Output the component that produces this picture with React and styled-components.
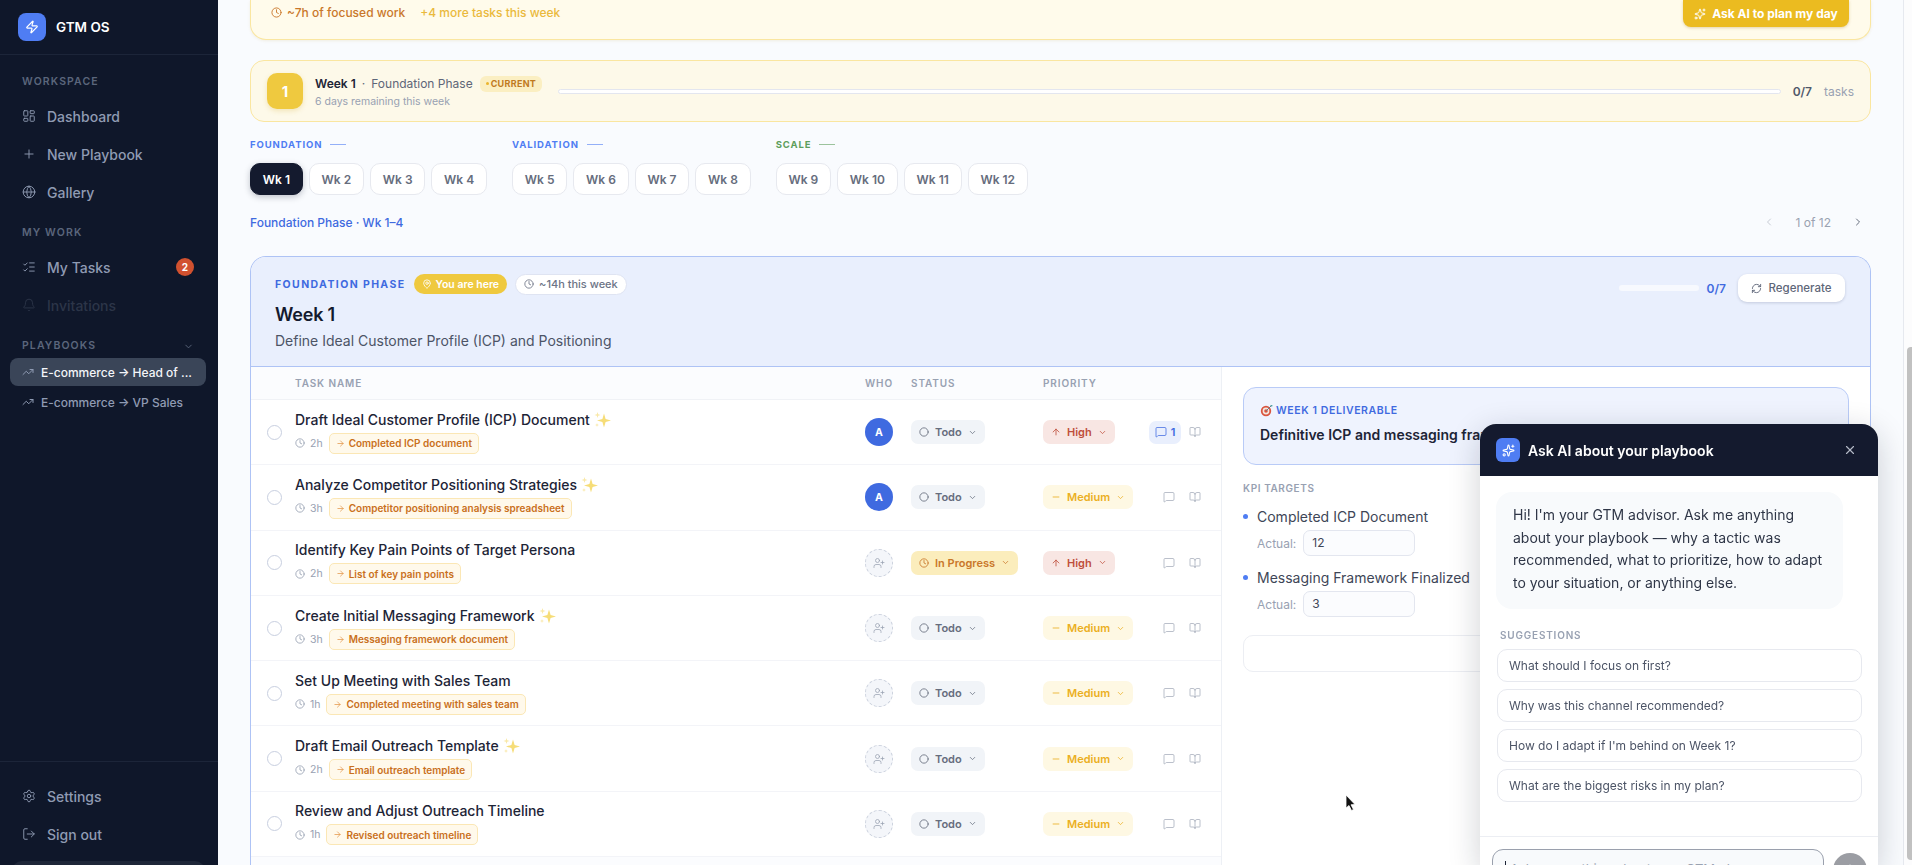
import React from 'react';
import styled, { createGlobalStyle } from 'styled-components';
import {
  ArrowRight, ArrowUp, BookOpen, ChevronDown, ChevronLeft, ChevronRight, Circle, Clock, Globe,
  LayoutDashboard, ListChecks, LogOut, MapPin, MessageSquare, Minus, Plus, RefreshCw,
  Settings, Sparkles, TrendingUp, UserPlus, X, Zap, Bell,
} from 'lucide-react';

const GlobalStyle = createGlobalStyle`
  * { box-sizing: border-box; }
  html, body { margin: 0; height: 100%; overflow: hidden; }
  body { font-family: Inter, "Liberation Sans", sans-serif; background: #f9fbfe; color: #141a2e; }
`;

const Shell = styled.div`
  display: flex;
  height: 865px;
  overflow: hidden;
`;

/* sidebar */
const Sidebar = styled.aside`
  width: 218px;
  flex: none;
  background: #0f172a;
  display: flex;
  flex-direction: column;
  overflow: hidden;
`;

const Brand = styled.div`
  height: 55px;
  flex: none;
  display: flex;
  align-items: center;
  gap: 10px;
  padding: 0 18px 1px;
  border-bottom: 1px solid #1c2539;
  color: #fff;
  font-size: 13.5px;
  font-weight: 600;
`;

const BrandMark = styled.div`
  width: 28px;
  height: 28px;
  border-radius: 8px;
  background: #4f7df3;
  display: flex;
  align-items: center;
  justify-content: center;
`;

const SideBody = styled.div`
  flex: 1;
  padding: 20px 12px 0 10px;
  display: flex;
  flex-direction: column;
`;

const SideLabel = styled.div`
  height: 14px;
  line-height: 14px;
  padding-left: 12px;
  font-size: 10.5px;
  font-weight: 600;
  letter-spacing: 1.1px;
  color: #5b667c;
  margin-top: ${({ $top }) => $top || 0}px;
  display: flex;
  align-items: center;
  justify-content: space-between;
  padding-right: 12px;
`;

const NavList = styled.div`
  display: flex;
  flex-direction: column;
  margin-top: 8px;
`;

const NavItem = styled.div`
  height: 38px;
  flex: none;
  display: flex;
  align-items: center;
  gap: 11px;
  padding-left: 12px;
  padding-right: 12px;
  font-size: 14px;
  font-weight: 500;
  color: ${({ $dim }) => ($dim ? '#2c3548' : '#8f9bb3')};
`;

const CountBadge = styled.span`
  margin-left: auto;
  width: 18px;
  height: 18px;
  border-radius: 50%;
  background: #d1512f;
  color: #fff;
  font-size: 10px;
  font-weight: 700;
  display: flex;
  align-items: center;
  justify-content: center;
`;

const PlaybookItem = styled.div`
  height: 28px;
  border-radius: 8px;
  display: flex;
  align-items: center;
  gap: 7px;
  padding: 0 12px;
  font-size: 12px;
  font-weight: 500;
  white-space: nowrap;
  margin-top: ${({ $top }) => $top || 0}px;
  background: ${({ $active }) => ($active ? '#3a4558' : 'transparent')};
  color: ${({ $active }) => ($active ? '#f3f5f9' : '#8f9bb3')};
  svg { color: #8f9bb3; flex: none; }
`;

const SideFoot = styled.div`
  border-top: 1px solid #1c2539;
  padding: 15px 10px 0;
  flex: none;
  height: 104px;
  margin-top: auto;
  display: flex;
  flex-direction: column;
  overflow: hidden;
`;

const UserStub = styled.div`
  height: 40px;
  flex: none;
  margin: 8px 3px 0 2px;
  border-radius: 10px;
  background: #1e2638;
`;

/* main column */
const Main = styled.main`
  flex: 1;
  min-width: 0;
  height: 865px;
  overflow: hidden;
  border-right: 1px solid #e6e9ef;
  margin-right: 8px;
  padding: 0 32px;
`;

const Banner = styled.div`
  height: 40px;
  background: #fffbeb;
  border: 1px solid #fae6a0;
  border-top: 0;
  border-radius: 0 0 16px 16px;
  display: flex;
  align-items: flex-start;
  justify-content: space-between;
  padding: 0 21px 0 20px;
  box-shadow: 0 1px 3px rgba(180, 140, 30, 0.12);
`;

const BannerInfo = styled.div`
  display: flex;
  align-items: center;
  gap: 15px;
  height: 25px;
  font-size: 12px;
  font-weight: 500;
  color: #c9772a;
`;

const BannerHint = styled.span`
  color: #eab93c;
`;

const IconText = styled.span`
  display: inline-flex;
  align-items: center;
  gap: 5px;
`;

const PlanButton = styled.div`
  width: 166px;
  height: 27px;
  border-radius: 0 0 8px 8px;
  background: #ebbb20;
  color: #fff;
  font-size: 12px;
  font-weight: 700;
  display: flex;
  align-items: center;
  justify-content: center;
  gap: 6px;
  box-shadow: 0 1px 3px rgba(160, 120, 20, 0.3);
`;

const WeekBar = styled.div`
  height: 62px;
  margin-top: 20px;
  background: #fdf9e9;
  border: 1px solid #fae6a0;
  border-radius: 14px;
  display: flex;
  align-items: center;
  padding: 0 16px;
`;

const WeekNumber = styled.div`
  width: 36px;
  height: 36px;
  border-radius: 10px;
  background: #efc93f;
  color: #fff;
  font-size: 15px;
  font-weight: 700;
  display: flex;
  align-items: center;
  justify-content: center;
  flex: none;
  box-shadow: 0 2px 5px rgba(210, 170, 40, 0.25);
`;

const WeekText = styled.div`
  margin-left: 12px;
  flex: none;
  display: flex;
  flex-direction: column;
  gap: 2px;
`;

const WeekTitle = styled.div`
  display: flex;
  align-items: center;
  gap: 6px;
  font-size: 12px;
  color: #5e6678;
  height: 18px;
  b { color: #1d2436; font-weight: 600; }
`;

const CurrentTag = styled.span`
  height: 16px;
  padding: 0 6px;
  margin-left: 1px;
  border-radius: 6px;
  background: #fbefc2;
  color: #c07a1e;
  font-size: 9px;
  font-weight: 700;
  letter-spacing: 0.3px;
  display: inline-flex;
  align-items: center;
  gap: 2px;
  &::before {
    content: '';
    width: 3px;
    height: 3px;
    border-radius: 50%;
    background: #ebb52c;
  }
`;

const WeekSub = styled.div`
  font-size: 10.5px;
  color: #98a1b2;
`;

const WeekTrack = styled.div`
  flex: 1;
  height: 5px;
  margin: 0 12px 0 16px;
  border-radius: 3px;
  background: #fff;
  border: 1px solid #e3e6ef;
`;

const WeekCount = styled.span`
  font-size: 12px;
  font-weight: 600;
  color: #50586a;
`;

const WeekUnit = styled.span`
  margin-left: 12px;
  font-size: 12px;
  color: #98a1b2;
`;

const PhaseRow = styled.div`
  display: flex;
  margin-top: 14px;
  gap: 25px;
`;

const PhaseGroup = styled.div`
  display: flex;
  flex-direction: column;
  gap: 11px;
`;

const PhaseLabel = styled.div`
  height: 16px;
  display: flex;
  align-items: center;
  gap: 8px;
  font-size: 9.5px;
  font-weight: 700;
  letter-spacing: 0.9px;
  color: ${({ $color }) => $color};
  &::after {
    content: '';
    width: 16px;
    height: 1px;
    background: ${({ $color }) => $color};
    opacity: 0.6;
  }
`;

const Pills = styled.div`
  display: flex;
  gap: 6px;
`;

const WeekPill = styled.div`
  height: 32px;
  padding: 0 11.8px;
  border-radius: 10px;
  font-size: 12px;
  font-weight: 600;
  display: flex;
  align-items: center;
  justify-content: center;
  background: ${({ $active }) => ($active ? '#141a2e' : '#fff')};
  color: ${({ $active }) => ($active ? '#fff' : '#666d7d')};
  border: 1px solid ${({ $active }) => ($active ? '#141a2e' : '#e7e9ef')};
  box-shadow: ${({ $active }) => ($active ? '0 2px 6px rgba(20,26,46,0.25)' : 'none')};
`;

const PagerRow = styled.div`
  height: 18px;
  margin-top: 18px;
  display: flex;
  align-items: center;
  justify-content: space-between;
`;

const PhaseLink = styled.div`
  font-size: 12px;
  font-weight: 500;
  color: #3f6ae0;
`;

const Pager = styled.div`
  display: flex;
  align-items: center;
  gap: 21px;
  padding-right: 7px;
  font-size: 12px;
  color: #9aa2b1;
`;

/* phase card */
const PhaseCard = styled.section`
  margin-top: 25px;
  border: 1px solid #aec3f5;
  border-radius: 16px 16px 0 0;
  border-bottom: 0;
  background: #fff;
  height: 640px;
  overflow: hidden;
`;

const CardHead = styled.header`
  height: 110px;
  background: #e9effd;
  border-bottom: 1px solid #aec3f5;
  padding: 17px 25px 0 24px;
  display: flex;
  justify-content: space-between;
`;

const HeadLine = styled.div`
  display: flex;
  align-items: center;
  gap: 8px;
  height: 20px;
`;

const PhaseName = styled.span`
  font-size: 10.5px;
  font-weight: 700;
  letter-spacing: 1.4px;
  color: #3f6ae0;
`;

const HerePill = styled.span`
  height: 20px;
  padding: 0 8px;
  border-radius: 10px;
  background: #efc93f;
  color: #fff;
  font-size: 10.5px;
  font-weight: 600;
  display: inline-flex;
  align-items: center;
  gap: 4px;
`;

const HoursPill = styled.span`
  height: 21px;
  padding: 0 8px;
  border-radius: 11px;
  background: #fff;
  border: 1px solid #dfe4f2;
  color: #6c7486;
  font-size: 11px;
  font-weight: 500;
  display: inline-flex;
  align-items: center;
  gap: 5px;
`;

const CardTitle = styled.h2`
  margin: 9px 0 0;
  font-size: 18px;
  line-height: 24px;
  font-weight: 600;
  letter-spacing: -0.2px;
  color: #141a2e;
`;

const CardSub = styled.p`
  margin: 4px 0 0;
  font-size: 14px;
  line-height: 20px;
  color: #4c5466;
`;

const HeadActions = styled.div`
  display: flex;
  align-items: center;
  height: 28px;
`;

const MiniTrack = styled.div`
  width: 80px;
  height: 6px;
  border-radius: 3px;
  background: #f7f9fe;
`;

const MiniCount = styled.span`
  margin: 0 12px 0 8px;
  font-size: 12px;
  font-weight: 600;
  color: #3f6ae0;
`;

const RegenButton = styled.div`
  width: 107px;
  height: 28px;
  border-radius: 9px;
  background: #fff;
  color: #5e6678;
  font-size: 11.5px;
  font-weight: 500;
  display: flex;
  align-items: center;
  justify-content: center;
  gap: 6px;
  box-shadow: 0 1px 3px rgba(30, 40, 80, 0.18);
`;

const CardBody = styled.div`
  display: flex;
  min-height: 530px;
`;

const TaskPane = styled.div`
  width: 971px;
  flex: none;
  border-right: 1px solid #edf0f5;
`;

const RowGrid = styled.div`
  display: grid;
  grid-template-columns: 44px 570px 46px 132px 1fr;
  align-items: center;
`;

const TableHead = styled(RowGrid)`
  height: 33px;
  background: #fbfcfe;
  border-bottom: 1px solid #f0f2f6;
  font-size: 10px;
  font-weight: 600;
  letter-spacing: 0.9px;
  color: #98a1b2;
`;

const TaskRow = styled(RowGrid)`
  height: 65.3px;
  border-bottom: 1px solid #f3f4f8;
`;

const TableFoot = styled.div`
  height: 40px;
  background: #fbfcfe;
`;

const CheckCircle = styled.span`
  justify-self: center;
  margin-left: 2px;
  width: 15px;
  height: 15px;
  border-radius: 50%;
  border: 1.5px solid #c8cfe0;
`;

const TaskMain = styled.div`
  display: flex;
  flex-direction: column;
  gap: 3px;
  margin-top: -1px;
`;

const TaskTitle = styled.div`
  font-size: 14px;
  line-height: 20px;
  font-weight: 500;
  color: #1d2436;
  display: flex;
  align-items: center;
  gap: 3px;
`;

const TaskMeta = styled.div`
  display: flex;
  align-items: center;
  gap: 6px;
  font-size: 10.5px;
  color: #98a1b2;
`;

const OutcomeTag = styled.span`
  height: 21px;
  padding: 0 6px;
  border-radius: 5px;
  background: #fff9eb;
  border: 1px solid #fbe7b5;
  color: #c9701c;
  font-size: 10px;
  font-weight: 600;
  display: inline-flex;
  align-items: center;
  gap: 4px;
  svg { color: #e3964a; }
`;

const Avatar = styled.span`
  width: 28px;
  height: 28px;
  border-radius: 50%;
  display: flex;
  align-items: center;
  justify-content: center;
  font-size: 10.5px;
  font-weight: 700;
  color: #fff;
  background: #3f6ae0;
`;

const EmptyAvatar = styled(Avatar)`
  background: #f4f6fa;
  border: 1px dashed #ccd2de;
  color: #9aa2b1;
`;

const Chip = styled.span`
  justify-self: start;
  height: 24px;
  padding: 0 8px;
  border-radius: 7px;
  font-size: 11px;
  font-weight: 600;
  display: inline-flex;
  align-items: center;
  gap: 6px;
  background: ${({ $bg }) => $bg};
  color: ${({ $color }) => $color};
`;

const RowCell = styled.div`
  display: flex;
  align-items: center;
  justify-content: space-between;
  padding-right: 20px;
`;

const RowActions = styled.div`
  display: flex;
  align-items: center;
  gap: 8px;
  color: #a4abb9;
`;

const CommentCount = styled.span`
  height: 23px;
  width: ${({ $on }) => ($on ? '32px' : '18px')};
  border-radius: 7px;
  display: inline-flex;
  align-items: center;
  justify-content: ${({ $on }) => ($on ? 'center' : 'flex-start')};
  gap: 4px;
  font-size: 11px;
  font-weight: 600;
  color: ${({ $on }) => ($on ? '#3f6ae0' : '#a4abb9')};
  background: ${({ $on }) => ($on ? '#e9effd' : 'transparent')};
`;

const SidePane = styled.div`
  flex: 1;
  padding: 20px 21px 0;
`;

const Deliverable = styled.div`
  height: 78px;
  border: 1px solid #b9cbf7;
  border-radius: 13px;
  background: #eff3fe;
  padding: 14px 16px;
`;

const DeliverableLabel = styled.div`
  display: flex;
  align-items: center;
  gap: 3px;
  font-size: 10.5px;
  font-weight: 600;
  letter-spacing: 0.6px;
  color: #3f6ae0;
  height: 16px;
`;

const DeliverableText = styled.div`
  margin-top: 7px;
  font-size: 14px;
  line-height: 20px;
  font-weight: 600;
  color: #1d2436;
`;

const KpiLabel = styled.div`
  margin-top: 16px;
  font-size: 10px;
  line-height: 14px;
  font-weight: 600;
  letter-spacing: 0.6px;
  color: #98a1b2;
`;

const KpiList = styled.div`
  margin-top: 12px;
  display: flex;
  flex-direction: column;
  gap: 12px;
`;

const KpiName = styled.div`
  display: flex;
  align-items: center;
  gap: 9px;
  font-size: 14px;
  line-height: 20px;
  color: #3e4657;
  &::before {
    content: '';
    width: 5px;
    height: 5px;
    border-radius: 50%;
    background: #4f7df3;
    margin: -2px 0 0 0;
  }
`;

const KpiActual = styled.div`
  margin: 3px 0 0 14px;
  display: flex;
  align-items: center;
  gap: 7px;
  font-size: 12px;
  color: #98a1b2;
`;

const KpiInput = styled.div`
  width: 112px;
  height: 26px;
  border: 1px solid #e3e6ef;
  border-radius: 7px;
  background: #fbfcfe;
  padding: 0 8px;
  font-size: 12px;
  line-height: 24px;
  color: #3e4657;
`;

const NotesBox = styled.div`
  margin-top: 18px;
  height: 37px;
  border: 1px solid #eceef3;
  border-radius: 10px;
`;

/* chat overlay */
const ChatPanel = styled.aside`
  position: fixed;
  left: 1480px;
  top: 424px;
  width: 398px;
  height: 441px;
  background: #fff;
  border-radius: 16px 16px 0 0;
  overflow: hidden;
  display: flex;
  flex-direction: column;
  box-shadow: 0 8px 32px rgba(15, 23, 42, 0.2);
`;

const ChatHead = styled.header`
  height: 52px;
  flex: none;
  background: #141a2e;
  display: flex;
  align-items: center;
  padding: 0 21px 0 16px;
  color: #fff;
  font-size: 14px;
  font-weight: 600;
  gap: 8px;
`;

const ChatMark = styled(BrandMark)`
  width: 24px;
  height: 24px;
  border-radius: 6px;
`;

const ChatClose = styled.span`
  margin-left: auto;
  display: flex;
  color: #b3b9c6;
`;

const ChatBody = styled.div`
  flex: 1;
  padding: 16px 16px 0;
`;

const Bubble = styled.div`
  width: 347px;
  height: 117px;
  padding: 12px 17px;
  border-radius: 16px;
  background: #f8fafc;
  font-size: 14px;
  line-height: 22.7px;
  color: #2f3647;
`;

const SuggestLabel = styled.div`
  margin: 19px 0 0 4px;
  font-size: 10px;
  line-height: 14px;
  font-weight: 600;
  letter-spacing: 0.8px;
  color: #98a1b2;
`;

const SuggestList = styled.div`
  margin: 7px 0 0 1px;
  display: flex;
  flex-direction: column;
  gap: 7px;
`;

const SuggestButton = styled.div`
  height: 33px;
  width: 365px;
  border: 1px solid #e7e9ef;
  border-radius: 10px;
  padding: 0 11px;
  display: flex;
  align-items: center;
  font-size: 12px;
  color: #4c5466;
`;

const ChatFoot = styled.div`
  height: 29px;
  flex: none;
  border-top: 1px solid #eceef3;
  padding: 12px 12px 0;
  display: flex;
  gap: 9px;
  overflow: hidden;
`;

const ChatInput = styled.div`
  width: 332px;
  height: 40px;
  flex: none;
  border: 1px solid #9aa0ad;
  border-radius: 11px;
  background: #f8fafc;
  padding: 0 12px;
  display: flex;
  align-items: center;
  font-size: 13px;
  color: #9aa2b1;
  white-space: nowrap;
  &::before {
    content: '';
    width: 1px;
    height: 16px;
    background: #1d2436;
    margin-right: 4px;
  }
`;

const SendButton = styled.div`
  width: 34px;
  height: 34px;
  flex: none;
  margin-top: 4px;
  border-radius: 50%;
  background: #9b9da3;
  color: #fff;
  display: flex;
  align-items: center;
  justify-content: center;
`;

const Cursor = styled.svg`
  position: fixed;
  left: 1345px;
  top: 794px;
`;

const ScrollTrack = styled.div`
  position: fixed;
  right: 0;
  top: 0;
  width: 8px;
  height: 865px;
  background: #fcfcfd;
  padding: 347px 0 5px 3px;
`;

const ScrollThumb = styled.div`
  height: 100%;
  border-radius: 4px 0 0 4px;
  background: #c1c1c1;
`;

const phases = [
  { label: 'FOUNDATION', color: '#4f7df3', weeks: [1, 2, 3, 4] },
  { label: 'VALIDATION', color: '#4f7df3', weeks: [5, 6, 7, 8] },
  { label: 'SCALE', color: '#5d9e5c', weeks: [9, 10, 11, 12] },
];

const todo = { bg: '#f1f4f8', color: '#666d7d', label: 'Todo', Icon: Circle };
const progress = { bg: '#fbedbc', color: '#c9772a', label: 'In Progress', Icon: Clock };
const high = { bg: '#f8e6e3', color: '#bf4f3c', label: 'High', Icon: ArrowUp };
const medium = { bg: '#fef8e3', color: '#ebaf22', label: 'Medium', Icon: Minus };

const tasks = [
  { title: 'Draft Ideal Customer Profile (ICP) Document', ai: true, time: '2h', tag: 'Completed ICP document', who: 'A', status: todo, priority: high, comments: 1 },
  { title: 'Analyze Competitor Positioning Strategies', ai: true, time: '3h', tag: 'Competitor positioning analysis spreadsheet', who: 'A', status: todo, priority: medium },
  { title: 'Identify Key Pain Points of Target Persona', time: '2h', tag: 'List of key pain points', status: progress, priority: high },
  { title: 'Create Initial Messaging Framework', ai: true, time: '3h', tag: 'Messaging framework document', status: todo, priority: medium },
  { title: 'Set Up Meeting with Sales Team', time: '1h', tag: 'Completed meeting with sales team', status: todo, priority: medium },
  { title: 'Draft Email Outreach Template', ai: true, time: '2h', tag: 'Email outreach template', status: todo, priority: medium },
  { title: 'Review and Adjust Outreach Timeline', time: '1h', tag: 'Revised outreach timeline', status: todo, priority: medium },
];

const suggestions = [
  'What should I focus on first?',
  'Why was this channel recommended?',
  "How do I adapt if I'm behind on Week 1?",
  'What are the biggest risks in my plan?',
];

const SparkleMark = () => (
  <svg width="18" height="18" viewBox="0 0 18 18" aria-hidden="true">
    <path d="M11 2.5 L12.6 7.9 L18 9.5 L12.6 11.1 L11 16.5 L9.4 11.1 L4 9.5 L9.4 7.9 Z" fill="#f6dd78" />
    <path d="M4.5 1 L5.2 3.3 L7.5 4 L5.2 4.7 L4.5 7 L3.8 4.7 L1.5 4 L3.8 3.3 Z" fill="#f9e8a6" />
    <path d="M4 12 L4.5 13.5 L6 14 L4.5 14.5 L4 16 L3.5 14.5 L2 14 L3.5 13.5 Z" fill="#f9e8a6" />
  </svg>
);

const TargetMark = () => (
  <svg width="13" height="13" viewBox="0 0 13 13" aria-hidden="true">
    <circle cx="6" cy="7" r="5.2" fill="#d9553f" />
    <circle cx="6" cy="7" r="3.4" fill="#f3e7df" />
    <circle cx="6" cy="7" r="1.8" fill="#d9553f" />
    <path d="M6 7 L11 2" stroke="#6d7a86" strokeWidth="1" />
    <path d="M10 1 L12.5 1 L12 3 Z" fill="#4fa3a5" />
  </svg>
);

const TaskLine = ({ task }) => {
  const StatusIcon = task.status.Icon;
  const PriorityIcon = task.priority.Icon;
  return (
    <TaskRow>
      <CheckCircle />
      <TaskMain>
        <TaskTitle>
          {task.title}
          {task.ai && <SparkleMark />}
        </TaskTitle>
        <TaskMeta>
          <IconText>
            <Clock size={10} />
            {task.time}
          </IconText>
          <OutcomeTag>
            <ArrowRight size={9} />
            {task.tag}
          </OutcomeTag>
        </TaskMeta>
      </TaskMain>
      {task.who ? (
        <Avatar>{task.who}</Avatar>
      ) : (
        <EmptyAvatar>
          <UserPlus size={12} strokeWidth={1.5} />
        </EmptyAvatar>
      )}
      <Chip $bg={task.status.bg} $color={task.status.color}>
        <StatusIcon size={10} />
        {task.status.label}
        <ChevronDown size={9} />
      </Chip>
      <RowCell>
        <Chip $bg={task.priority.bg} $color={task.priority.color}>
          <PriorityIcon size={10} />
          {task.priority.label}
          <ChevronDown size={9} />
        </Chip>
        <RowActions>
          <CommentCount $on={task.comments}>
            <MessageSquare size={12} strokeWidth={1.5} />
            {task.comments}
          </CommentCount>
          <BookOpen size={12} strokeWidth={1.5} />
        </RowActions>
      </RowCell>
    </TaskRow>
  );
};

const App = () => (
  <Shell>
    <GlobalStyle />
    <Sidebar>
      <Brand>
        <BrandMark>
          <Zap size={14} color="#fff" strokeWidth={2} />
        </BrandMark>
        GTM OS
      </Brand>
      <SideBody>
        <SideLabel>WORKSPACE</SideLabel>
        <NavList>
          <NavItem><LayoutDashboard size={14} strokeWidth={1.6} />Dashboard</NavItem>
          <NavItem><Plus size={14} strokeWidth={1.6} />New Playbook</NavItem>
          <NavItem><Globe size={14} strokeWidth={1.6} />Gallery</NavItem>
        </NavList>
        <SideLabel $top={15}>MY WORK</SideLabel>
        <NavList>
          <NavItem><ListChecks size={14} strokeWidth={1.6} />My Tasks<CountBadge>2</CountBadge></NavItem>
          <NavItem $dim><Bell size={14} strokeWidth={1.6} />Invitations</NavItem>
        </NavList>
        <SideLabel $top={15}>PLAYBOOKS<ChevronDown size={11} /></SideLabel>
        <PlaybookItem $active $top={5}>
          <TrendingUp size={12} />
          <span>E-commerce → Head of ...</span>
        </PlaybookItem>
        <PlaybookItem $top={2}>
          <TrendingUp size={12} />
          <span>E-commerce → VP Sales</span>
        </PlaybookItem>
      </SideBody>
      <SideFoot>
        <NavItem><Settings size={14} strokeWidth={1.6} />Settings</NavItem>
        <NavItem><LogOut size={14} strokeWidth={1.6} />Sign out</NavItem>
        <UserStub />
      </SideFoot>
    </Sidebar>

    <Main>
      <Banner>
        <BannerInfo>
          <IconText>
            <Clock size={11} />
            ~7h of focused work
          </IconText>
          <BannerHint>+4 more tasks this week</BannerHint>
        </BannerInfo>
        <PlanButton>
          <Sparkles size={12} />
          Ask AI to plan my day
        </PlanButton>
      </Banner>

      <WeekBar>
        <WeekNumber>1</WeekNumber>
        <WeekText>
          <WeekTitle>
            <b>Week 1</b>·<span>Foundation Phase</span>
            <CurrentTag>CURRENT</CurrentTag>
          </WeekTitle>
          <WeekSub>6 days remaining this week</WeekSub>
        </WeekText>
        <WeekTrack />
        <WeekCount>0/7</WeekCount>
        <WeekUnit>tasks</WeekUnit>
      </WeekBar>

      <PhaseRow>
        {phases.map((phase) => (
          <PhaseGroup key={phase.label}>
            <PhaseLabel $color={phase.color}>{phase.label}</PhaseLabel>
            <Pills>
              {phase.weeks.map((week) => (
                <WeekPill key={week} $active={week === 1}>Wk {week}</WeekPill>
              ))}
            </Pills>
          </PhaseGroup>
        ))}
      </PhaseRow>

      <PagerRow>
        <PhaseLink>Foundation Phase · Wk 1–4</PhaseLink>
        <Pager>
          <ChevronLeft size={12} color="#c8ccd5" />
          <span>1 of 12</span>
          <ChevronRight size={12} color="#666d7d" />
        </Pager>
      </PagerRow>

      <PhaseCard>
        <CardHead>
          <div>
            <HeadLine>
              <PhaseName>FOUNDATION PHASE</PhaseName>
              <HerePill><MapPin size={10} />You are here</HerePill>
              <HoursPill><Clock size={10} />~14h this week</HoursPill>
            </HeadLine>
            <CardTitle>Week 1</CardTitle>
            <CardSub>Define Ideal Customer Profile (ICP) and Positioning</CardSub>
          </div>
          <HeadActions>
            <MiniTrack />
            <MiniCount>0/7</MiniCount>
            <RegenButton><RefreshCw size={11} />Regenerate</RegenButton>
          </HeadActions>
        </CardHead>
        <CardBody>
          <TaskPane>
            <TableHead>
              <span />
              <span>TASK NAME</span>
              <span>WHO</span>
              <span>STATUS</span>
              <span>PRIORITY</span>
            </TableHead>
            {tasks.map((task) => (
              <TaskLine key={task.title} task={task} />
            ))}
            <TableFoot />
          </TaskPane>
          <SidePane>
            <Deliverable>
              <DeliverableLabel><TargetMark />WEEK 1 DELIVERABLE</DeliverableLabel>
              <DeliverableText>Definitive ICP and messaging framework</DeliverableText>
            </Deliverable>
            <KpiLabel>KPI TARGETS</KpiLabel>
            <KpiList>
              <div>
                <KpiName>Completed ICP Document</KpiName>
                <KpiActual>Actual:<KpiInput>12</KpiInput></KpiActual>
              </div>
              <div>
                <KpiName>Messaging Framework Finalized</KpiName>
                <KpiActual>Actual:<KpiInput>3</KpiInput></KpiActual>
              </div>
            </KpiList>
            <NotesBox />
          </SidePane>
        </CardBody>
      </PhaseCard>
    </Main>

    <ChatPanel>
      <ChatHead>
        <ChatMark><Sparkles size={13} color="#fff" /></ChatMark>
        Ask AI about your playbook
        <ChatClose><X size={14} /></ChatClose>
      </ChatHead>
      <ChatBody>
        <Bubble>
          Hi! I'm your GTM advisor. Ask me anything about your playbook — why a tactic was
          recommended, what to prioritize, how to adapt to your situation, or anything else.
        </Bubble>
        <SuggestLabel>SUGGESTIONS</SuggestLabel>
        <SuggestList>
          {suggestions.map((text) => (
            <SuggestButton key={text}>{text}</SuggestButton>
          ))}
        </SuggestList>
      </ChatBody>
      <ChatFoot>
        <ChatInput>Ask me anything about your GTM plan...</ChatInput>
        <SendButton><ArrowUp size={16} /></SendButton>
      </ChatFoot>
    </ChatPanel>

    <ScrollTrack><ScrollThumb /></ScrollTrack>
    <Cursor width="12" height="18" viewBox="0 0 12 18" aria-hidden="true">
      <path d="M1 1 L1 14 L4 11.5 L6.5 16.5 L8.5 15.5 L6 10.8 L10 10.5 Z" fill="#111" stroke="#fff" strokeWidth="0.8" />
    </Cursor>
  </Shell>
);

export default App;
